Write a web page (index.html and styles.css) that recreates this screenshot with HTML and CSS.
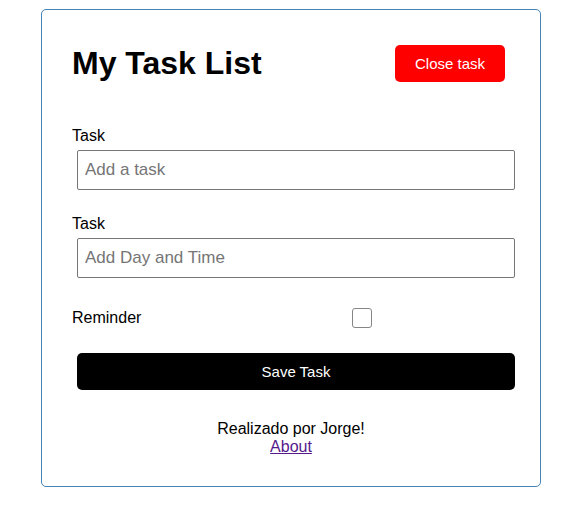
FILE: index.html
```html
<!DOCTYPE html>
<html lang="en">
<head>
<meta charset="utf-8">
<title>My Task List</title>
<link rel="stylesheet" href="styles.css">
</head>
<body>
<div class="container">
  <header class="header">
    <h1 class="title">My Task List</h1>
    <button class="btn btn-red" type="button">Close task</button>
  </header>
  <form class="add-form">
    <div class="form-control">
      <label class="field-label">Task</label>
      <input class="field-input" type="text" placeholder="Add a task">
    </div>
    <div class="form-control">
      <label class="field-label">Task</label>
      <input class="field-input" type="text" placeholder="Add Day and Time">
    </div>
    <div class="form-control form-control-check">
      <label class="check-label">Reminder</label>
      <span class="check-wrap"><input class="check-box" type="checkbox"></span>
    </div>
    <button class="btn btn-block" type="button">Save Task</button>
  </form>
  <footer class="footer">
    <div class="footer-text">Realizado por Jorge!</div>
    <a class="footer-link" href="#about">About</a>
  </footer>
</div>
</body>
</html>
```

FILE: styles.css
```css
* {
  box-sizing: border-box;
}

body {
  margin: 0;
  font-family: "Liberation Sans", Arial, sans-serif;
  font-size: 16px;
  color: #000;
  background: #fff;
}

.container {
  width: 500px;
  margin: 9px 0 0 41px;
  border: 1px solid #4682b4;
  border-radius: 5px;
  padding: 30px;
}

.header {
  display: flex;
  justify-content: space-between;
  align-items: center;
  margin-bottom: 40px;
}

.title {
  margin: 0;
  font-size: 32px;
  font-weight: bold;
  line-height: 37px;
}

.btn {
  display: inline-block;
  border: none;
  border-radius: 5px;
  margin: 5px;
  padding: 10px 20px;
  font-family: "Liberation Sans", Arial, sans-serif;
  font-size: 15px;
  line-height: 17px;
  color: #fff;
  background: #000;
  cursor: pointer;
}

.btn-red {
  background: #ff0000;
}

.btn-block {
  display: block;
  width: 100%;
}

.add-form {
  margin: 0;
}

.form-control {
  display: flow-root;
  margin: 20px 0;
}

.field-label {
  display: block;
  line-height: 18px;
}

.field-input {
  display: block;
  width: 100%;
  height: 40px;
  margin: 5px;
  padding: 3px 7px;
  font-family: "Liberation Sans", Arial, sans-serif;
  font-size: 17px;
  border: 1px solid #767676;
  border-radius: 2px;
  background: #fff;
}

.field-input::placeholder {
  color: #757575;
}

.form-control-check {
  display: flex;
  align-items: center;
  justify-content: space-between;
}

.check-label {
  flex: 1;
}

.check-wrap {
  flex: 2;
  margin: 5px;
  height: 20px;
  display: flex;
  justify-content: center;
}

.check-box {
  appearance: none;
  -webkit-appearance: none;
  width: 20px;
  height: 20px;
  margin: 0;
  border: 1px solid #858585;
  border-radius: 3px;
  background: #fff;
}

.footer {
  margin-top: 30px;
  text-align: center;
}

.footer-text {
  line-height: 18px;
}

.footer-link {
  color: #551a8b;
  text-decoration: underline;
  line-height: 18px;
}
```
